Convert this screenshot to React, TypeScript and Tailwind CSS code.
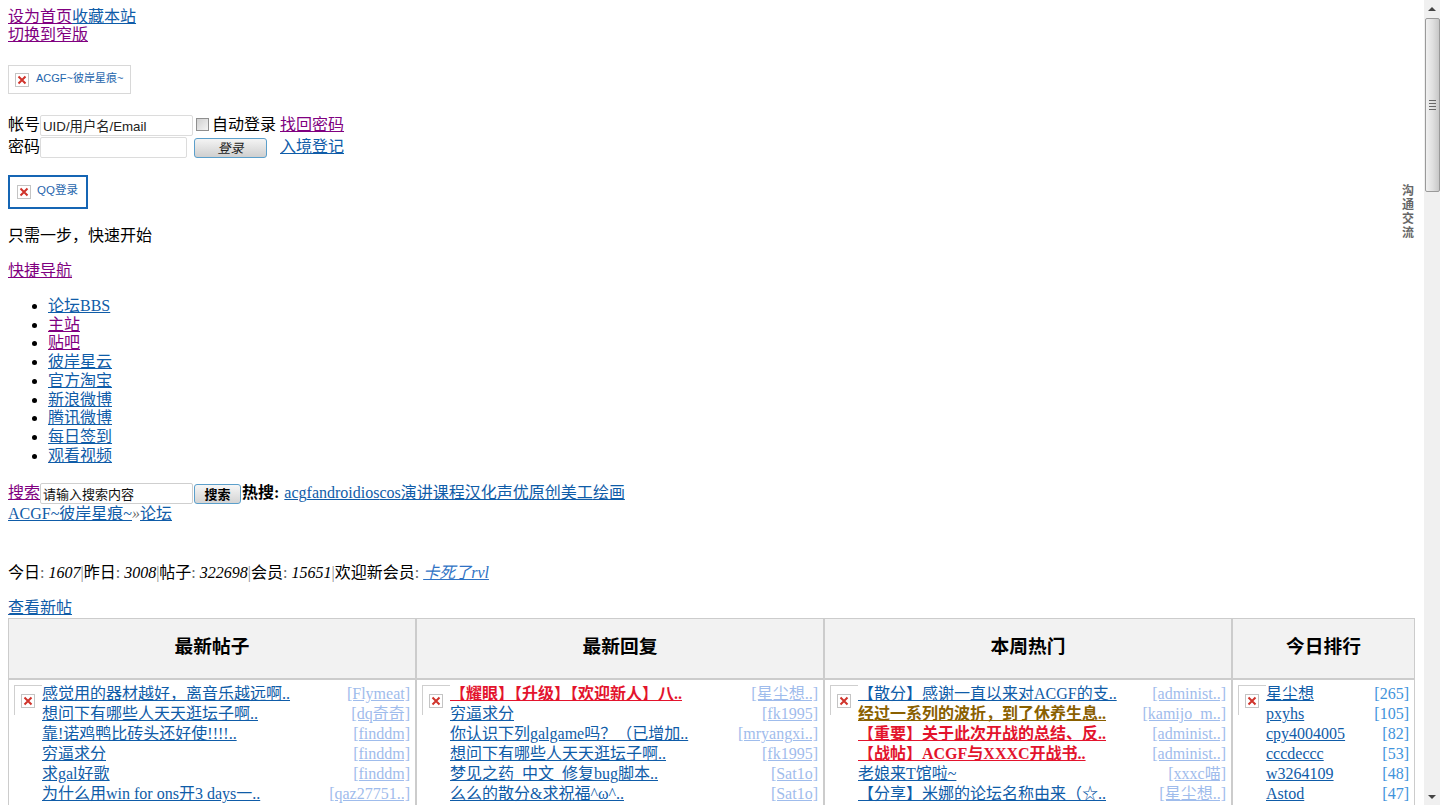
import React from "react";

const BLUE = "text-[#0f5ca8] underline";
const PURPLE = "text-[#800080] underline";

function BrokenIcon() {
  return (
    <svg width="14" height="14" viewBox="0 0 14 14" className="shrink-0">
      <rect x="0.5" y="0.5" width="13" height="13" fill="#fff" stroke="#c4c4c4" />
      <path d="M3.5 3.5 L10.5 10.5 M10.5 3.5 L3.5 10.5" stroke="#d0342c" strokeWidth="2" />
    </svg>
  );
}

type Row = { t: string; by: string; c?: string };

const col1: Row[] = [
  { t: "感觉用的器材越好，离音乐越远啊..", by: "[Flymeat]" },
  { t: "想问下有哪些人天天逛坛子啊..", by: "[dq奇奇]" },
  { t: "靠!诺鸡鸭比砖头还好使!!!!..", by: "[finddm]" },
  { t: "穷逼求分", by: "[finddm]" },
  { t: "求gal好歌", by: "[finddm]" },
  { t: "为什么用win for ons开3 days一..", by: "[qaz27751..]" },
  { t: "冰蓝的夜，空白的心", by: "[finddm]" },
];
const col2: Row[] = [
  { t: "【耀眼】【升级】【欢迎新人】八..", by: "[星尘想..]", c: "text-[#e3142d] font-bold underline" },
  { t: "穷逼求分", by: "[fk1995]" },
  { t: "你认识下列galgame吗？（已增加..", by: "[mryangxi..]" },
  { t: "想问下有哪些人天天逛坛子啊..", by: "[fk1995]" },
  { t: "梦见之药_中文_修复bug脚本..", by: "[Sat1o]" },
  { t: "么么的散分&求祝福^ω^..", by: "[Sat1o]" },
  { t: "来来来，一起来来来【ACGF】..", by: "[Sat1o]" },
];
const col3: Row[] = [
  { t: "【散分】感谢一直以来对ACGF的支..", by: "[administ..]" },
  { t: "经过一系列的波折，到了休养生息..", by: "[kamijo_m..]", c: "text-[#8a6000] font-bold underline" },
  { t: "【重要】关于此次开战的总结、反..", by: "[administ..]", c: "text-[#e3142d] font-bold underline" },
  { t: "【战帖】ACGF与XXXC开战书..", by: "[administ..]", c: "text-[#e3142d] font-bold underline" },
  { t: "老娘来T馆啦~", by: "[xxxc喵]" },
  { t: "【分享】米娜的论坛名称由来（☆..", by: "[星尘想..]" },
  { t: "一个人的世界，有个人的精彩..", by: "[finddm]" },
];
const rank: [string, string][] = [
  ["星尘想", "[265]"],
  ["pxyhs", "[105]"],
  ["cpy4004005", "[82]"],
  ["cccdeccc", "[53]"],
  ["w3264109", "[48]"],
  ["Astod", "[47]"],
  ["来自火星的", "[40]"],
];

function Placeholder() {
  return (
    <div className="mt-[1px] w-[28px] h-[30px] shrink-0 border-l border-t border-[#cfcfcf] flex items-center justify-center pr-[1px]">
      <BrokenIcon />
    </div>
  );
}

function ListCell({ rows }: { rows: Row[] }) {
  return (
    <div className="border-r-2 border-[#cccccc] pl-[5px] pr-[5px] pt-[4px] flex">
      <Placeholder />
      <div className="flex-1 min-w-0 flex flex-col">
        {rows.map((r, i) => (
          <div key={i} className="h-[20px] leading-[20px] flex justify-between whitespace-nowrap">
            <a className={r.c ?? BLUE}>{r.t}</a>
            <a className="text-[#9fbcec] underline">{r.by}</a>
          </div>
        ))}
      </div>
    </div>
  );
}

function Head({ children, last }: { children: React.ReactNode; last?: boolean }) {
  return (
    <div
      className={`h-[61px] pb-[3px] bg-[#f2f2f2] border-b-2 border-[#cccccc] flex items-center justify-center text-[18.72px] font-bold ${
        last ? "border-r" : "border-r-2"
      }`}
    >
      {children}
    </div>
  );
}

function Scrollbar() {
  return (
    <div className="w-[16px] h-[805px] shrink-0 bg-[#f0f0f0] flex flex-col items-center">
      <div className="h-[18px] flex items-center justify-center">
        <div className="w-0 h-0 border-l-[4px] border-r-[4px] border-b-[4px] border-l-transparent border-r-transparent border-b-[#444]" />
      </div>
      <div className="w-[15px] h-[174px] border border-[#9a9a9a] rounded-[2px] bg-linear-to-r from-[#f1f1f1] via-[#e0e0e0] to-[#c8c8c8] flex flex-col items-center justify-center gap-[2px]">
        <div className="w-[7px] h-[1px] bg-[#666]" />
        <div className="w-[7px] h-[1px] bg-[#666]" />
        <div className="w-[7px] h-[1px] bg-[#666]" />
        <div className="w-[7px] h-[1px] bg-[#666]" />
      </div>
      <div className="flex-1" />
      <div className="h-[16px] flex items-center justify-center">
        <div className="w-0 h-0 border-l-[4px] border-r-[4px] border-t-[4px] border-l-transparent border-r-transparent border-t-[#444]" />
      </div>
    </div>
  );
}

export default function App() {
  const nav: [string, boolean][] = [
    ["论坛BBS", false],
    ["主站", true],
    ["贴吧", true],
    ["彼岸星云", false],
    ["官方淘宝", false],
    ["新浪微博", false],
    ["腾讯微博", false],
    ["每日签到", false],
    ["观看视频", false],
  ];
  const sep = <span className="text-[#8a8a8a]">|</span>;
  return (
    <div className="relative flex h-[805px] overflow-hidden bg-white text-black text-[16px] leading-[18px] font-['Liberation_Serif','Noto_Sans_CJK_SC',serif]">
      <div className="flex-1 min-w-0 pl-[8px] pr-[9px] pt-[8px]">
        <div className="h-[18px] whitespace-nowrap">
          <a className={PURPLE}>设为首页</a>
          <a className={BLUE}>收藏本站</a>
        </div>
        <div className="h-[18px]">
          <a className={PURPLE}>切换到窄版</a>
        </div>

        <div className="mt-[21px] w-[123px] h-[29px] border border-[#d8d8d8] flex items-center pl-[6px] gap-[7px] font-['Liberation_Sans','Noto_Sans_CJK_SC',sans-serif] text-[11px] text-[#1f66ad] whitespace-nowrap overflow-hidden">
          <BrokenIcon />
          <span className="mb-[4px]">ACGF~彼岸星痕~</span>
        </div>

        <div className="mt-[21px] flex items-start h-[21px] leading-[20px] whitespace-nowrap">
          <span className="w-[32px]">帐号</span>
          <input
            defaultValue="UID/用户名/Email"
            className="w-[153px] h-[21px] border border-[#dcdcdc] rounded-[2px] px-[2px] pb-[1px] text-[13.3px] text-[#222] outline-none font-['Liberation_Sans','Noto_Sans_CJK_SC',sans-serif]"
          />
          <input
            type="checkbox"
            className="appearance-none mt-[3px] ml-[3px] w-[13px] h-[13px] border border-[#8f8f8f] bg-linear-to-br from-[#d0d0d0] to-[#f4f4f4]"
          />
          <span className="ml-[3px]">自动登录</span>
          <a className={`${PURPLE} ml-[4px]`}>找回密码</a>
        </div>
        <div className="mt-[1px] flex items-start h-[21px] leading-[20px] whitespace-nowrap">
          <span className="w-[32px]">密码</span>
          <input className="w-[147px] h-[21px] border border-[#dcdcdc] rounded-[2px] outline-none" />
          <button className="mt-[1px] ml-[7px] w-[73px] h-[20px] border border-[#5b9fcb] rounded-[3px] bg-linear-to-b from-[#f4f4f4] to-[#cfcfcf] text-[13px] italic leading-none text-[#222]">
            登录
          </button>
          <a className={`${BLUE} ml-[13px]`}>入境登记</a>
        </div>

        <div className="mt-[17px] w-[80px] h-[34px] border-2 border-[#1565b4] flex items-center pl-[7px] gap-[6px] font-['Liberation_Sans','Noto_Sans_CJK_SC',sans-serif] text-[11.5px] text-[#1f66ad] whitespace-nowrap">
          <BrokenIcon />
          <span className="mb-[4px]">QQ登录</span>
        </div>

        <p className="mt-[18px] h-[18px]">只需一步，快速开始</p>
        <div className="mt-[17px] h-[18px]">
          <a className={PURPLE}>快捷导航</a>
        </div>

        <ul className="mt-[16.75px] pl-[40px] list-disc">
          {nav.map(([label, visited]) => (
            <li key={label} className="h-[18.75px] leading-[18.75px]">
              <a className={visited ? PURPLE : BLUE}>{label}</a>
            </li>
          ))}
        </ul>

        <div className="mt-[18.75px] flex items-start h-[20px] whitespace-nowrap">
          <a className={PURPLE}>搜索</a>
          <input
            defaultValue="请输入搜索内容"
            className="-mt-[1px] w-[153px] h-[21px] border border-[#cfcfcf] rounded-[2px] px-[2px] text-[13px] text-[#111] outline-none"
          />
          <button className="ml-[1px] w-[47px] h-[20px] border border-[#5b9fcb] rounded-[3px] bg-linear-to-b from-[#f6f6f6] to-[#d4d4d4] text-[13px] font-bold leading-none">
            搜索
          </button>
          <b className="ml-[1px]">热搜:</b>
          <span className="ml-[5px]">
            {["acg", "fan", "droid", "ios", "cos", "演讲", "课程", "汉化", "声优", "原创", "美工", "绘画"].map((k) => (
              <a key={k} className={BLUE}>
                {k}
              </a>
            ))}
          </span>
        </div>
        <div className="mt-[1px] h-[18px] whitespace-nowrap">
          <a className={BLUE}>ACGF~彼岸星痕~</a>
          <em className="text-[#666]">»</em>
          <a className={BLUE}>论坛</a>
        </div>

        <div className="mt-[41px] h-[18px] whitespace-nowrap">
          今日<span className="text-[#666]">: </span>
          <em>1607</em>
          {sep}昨日<span className="text-[#666]">: </span>
          <em>3008</em>
          {sep}帖子<span className="text-[#666]">: </span>
          <em>322698</em>
          {sep}会员<span className="text-[#666]">: </span>
          <em>15651</em>
          {sep}欢迎新会员<span className="text-[#666]">: </span>
          <em>
            <a className="text-[#2f72c4] underline">卡死了rvl</a>
          </em>
        </div>

        <div className="mt-[17px] h-[18px]">
          <a className={BLUE}>查看新帖</a>
        </div>

        <div className="mt-[1px] w-[1407px] border-t border-l border-[#cccccc] grid grid-cols-[408px_408px_408px_182px]">
          <Head>最新帖子</Head>
          <Head>最新回复</Head>
          <Head>本周热门</Head>
          <Head last>今日排行</Head>
          <ListCell rows={col1} />
          <ListCell rows={col2} />
          <ListCell rows={col3} />
          <div className="border-r border-[#cccccc] pl-[5px] pr-[5px] pt-[4px] flex">
            <Placeholder />
            <div className="flex-1 min-w-0 flex flex-col">
              {rank.map(([n, v]) => (
                <div key={n} className="h-[20px] leading-[20px] flex justify-between whitespace-nowrap">
                  <a className={BLUE}>{n}</a>
                  <span className="text-[#3f93dc]">{v}</span>
                </div>
              ))}
            </div>
          </div>
        </div>
      </div>
      <Scrollbar />
      <div className="absolute left-[1402px] top-[183px] w-[14px] text-[12px] leading-[14px] font-bold text-[#666] font-['Noto_Sans_CJK_SC',sans-serif]">
        沟通交流
      </div>
    </div>
  );
}
